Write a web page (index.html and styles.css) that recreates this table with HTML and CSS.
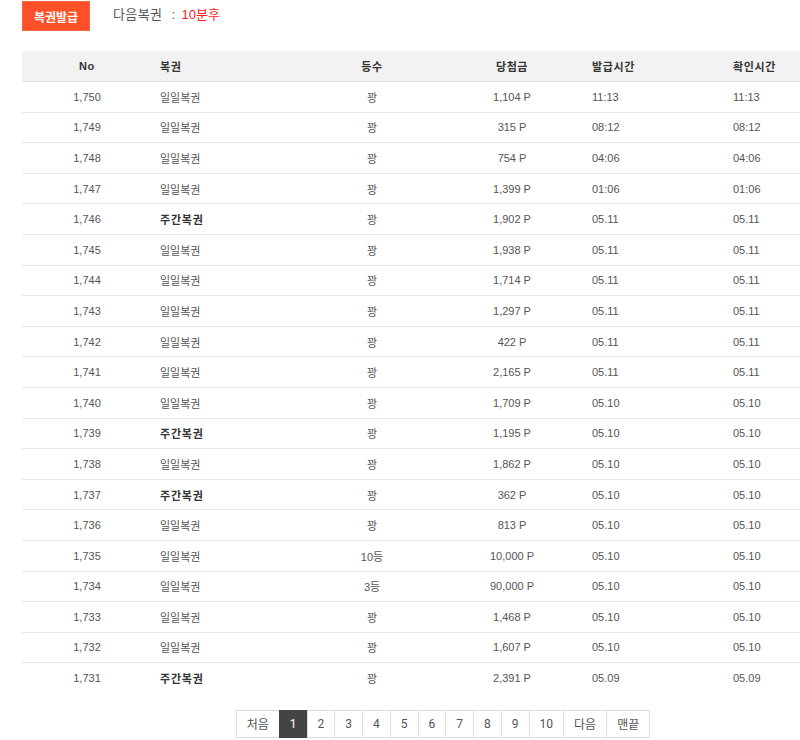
FILE: index.html
```html
<!DOCTYPE html>
<html lang="ko">
<head>
<meta charset="utf-8">
<link rel="stylesheet" href="styles.css">
</head>
<body>
<div class="viewport">
<div class="page">
  <div class="topbar">
    <button class="issue-btn">복권발급</button>
    <div class="next">다음복권<span class="sep">:</span><span class="next-time">10분후</span></div>
  </div>
  <table class="lotto">
    <colgroup>
      <col class="c1"><col class="c2"><col class="c3"><col class="c4"><col class="c5"><col class="c6">
    </colgroup>
    <thead>
      <tr><th class="no">No</th><th class="name">복권</th><th class="rank">등수</th><th class="prize">당첨금</th><th class="time">발급시간</th><th class="time2">확인시간</th></tr>
    </thead>
    <tbody>
      <tr><td class="no">1,750</td><td class="name">일일복권</td><td class="rank">꽝</td><td class="prize">1,104 P</td><td class="time">11:13</td><td class="time2">11:13</td></tr>
      <tr><td class="no">1,749</td><td class="name">일일복권</td><td class="rank">꽝</td><td class="prize">315 P</td><td class="time">08:12</td><td class="time2">08:12</td></tr>
      <tr><td class="no">1,748</td><td class="name">일일복권</td><td class="rank">꽝</td><td class="prize">754 P</td><td class="time">04:06</td><td class="time2">04:06</td></tr>
      <tr><td class="no">1,747</td><td class="name">일일복권</td><td class="rank">꽝</td><td class="prize">1,399 P</td><td class="time">01:06</td><td class="time2">01:06</td></tr>
      <tr><td class="no">1,746</td><td class="name weekly">주간복권</td><td class="rank">꽝</td><td class="prize">1,902 P</td><td class="time">05.11</td><td class="time2">05.11</td></tr>
      <tr><td class="no">1,745</td><td class="name">일일복권</td><td class="rank">꽝</td><td class="prize">1,938 P</td><td class="time">05.11</td><td class="time2">05.11</td></tr>
      <tr><td class="no">1,744</td><td class="name">일일복권</td><td class="rank">꽝</td><td class="prize">1,714 P</td><td class="time">05.11</td><td class="time2">05.11</td></tr>
      <tr><td class="no">1,743</td><td class="name">일일복권</td><td class="rank">꽝</td><td class="prize">1,297 P</td><td class="time">05.11</td><td class="time2">05.11</td></tr>
      <tr><td class="no">1,742</td><td class="name">일일복권</td><td class="rank">꽝</td><td class="prize">422 P</td><td class="time">05.11</td><td class="time2">05.11</td></tr>
      <tr><td class="no">1,741</td><td class="name">일일복권</td><td class="rank">꽝</td><td class="prize">2,165 P</td><td class="time">05.11</td><td class="time2">05.11</td></tr>
      <tr><td class="no">1,740</td><td class="name">일일복권</td><td class="rank">꽝</td><td class="prize">1,709 P</td><td class="time">05.10</td><td class="time2">05.10</td></tr>
      <tr><td class="no">1,739</td><td class="name weekly">주간복권</td><td class="rank">꽝</td><td class="prize">1,195 P</td><td class="time">05.10</td><td class="time2">05.10</td></tr>
      <tr><td class="no">1,738</td><td class="name">일일복권</td><td class="rank">꽝</td><td class="prize">1,862 P</td><td class="time">05.10</td><td class="time2">05.10</td></tr>
      <tr><td class="no">1,737</td><td class="name weekly">주간복권</td><td class="rank">꽝</td><td class="prize">362 P</td><td class="time">05.10</td><td class="time2">05.10</td></tr>
      <tr><td class="no">1,736</td><td class="name">일일복권</td><td class="rank">꽝</td><td class="prize">813 P</td><td class="time">05.10</td><td class="time2">05.10</td></tr>
      <tr><td class="no">1,735</td><td class="name">일일복권</td><td class="rank">10등</td><td class="prize">10,000 P</td><td class="time">05.10</td><td class="time2">05.10</td></tr>
      <tr><td class="no">1,734</td><td class="name">일일복권</td><td class="rank">3등</td><td class="prize">90,000 P</td><td class="time">05.10</td><td class="time2">05.10</td></tr>
      <tr><td class="no">1,733</td><td class="name">일일복권</td><td class="rank">꽝</td><td class="prize">1,468 P</td><td class="time">05.10</td><td class="time2">05.10</td></tr>
      <tr><td class="no">1,732</td><td class="name">일일복권</td><td class="rank">꽝</td><td class="prize">1,607 P</td><td class="time">05.10</td><td class="time2">05.10</td></tr>
      <tr><td class="no">1,731</td><td class="name weekly">주간복권</td><td class="rank">꽝</td><td class="prize">2,391 P</td><td class="time">05.09</td><td class="time2">05.09</td></tr>
    </tbody>
  </table>
  <nav class="pager">
    <a class="pg">처음</a><a class="pg active">1</a><a class="pg">2</a><a class="pg">3</a><a class="pg">4</a><a class="pg">5</a><a class="pg">6</a><a class="pg">7</a><a class="pg">8</a><a class="pg">9</a><a class="pg">10</a><a class="pg">다음</a><a class="pg">맨끝</a>
  </nav>
</div>
</div>
</body>
</html>
```
FILE: styles.css
```css
html, body {
  margin: 0;
  padding: 0;
  background: #fff;
}
body {
  font-family: "Liberation Sans", "Noto Sans CJK KR", sans-serif;
  font-size: 11px;
  color: #555;
}
.viewport {
  width: 800px;
  height: 740px;
  overflow: hidden;
}
.page {
  width: 843px;
  padding: 1px 0 0 22px;
}
.topbar {
  display: flex;
  align-items: center;
  gap: 23px;
  height: 30px;
}
.issue-btn {
  width: 68px;
  height: 30px;
  border: 1px solid #f2653f;
  background: #ff5127;
  color: #fff;
  font-family: "Noto Sans CJK KR", sans-serif;
  font-size: 12px;
  font-weight: 700;
  padding: 0;
  margin: 0;
}
.next {
  font-family: "Noto Sans CJK KR", sans-serif;
  font-size: 13px;
  letter-spacing: 0.4px;
  color: #555;
  margin-top: -6px;
}
.sep {
  font-family: "Liberation Sans", sans-serif;
  margin: 0 6px 0 9px;
}
.next-time {
  color: #ff1a1a;
  letter-spacing: 0;
  font-family: "Liberation Sans", "Noto Sans CJK KR", sans-serif;
}
.lotto {
  width: 843px;
  margin-top: 20px;
  border-collapse: collapse;
  table-layout: fixed;
}
.c1 { width: 130px; }
.c2 { width: 150px; }
.c3 { width: 140px; }
.c4 { width: 140px; }
.c5 { width: 140px; }
.c6 { width: 143px; }
.lotto th {
  height: 30px;
  background: #f2f2f2;
  border-bottom: 1px solid #e2e2e2;
  font-weight: 700;
  color: #333;
  font-size: 11px;
  letter-spacing: 0.6px;
  padding: 0;
}
.lotto td {
  height: 29.6px;
  border-bottom: 1px solid #e8e8e8;
  padding: 0;
  white-space: nowrap;
}
.lotto tbody tr:last-child td {
  border-bottom: 0;
}
.no { text-align: center; }
.name { text-align: left; padding-left: 8px !important; }
.rank { text-align: center; }
.prize { text-align: center; }
.time { text-align: left; padding-left: 10px !important; }
.time2 { text-align: left; padding-left: 11px !important; }
.weekly {
  font-weight: 700;
  color: #333;
  letter-spacing: 0.8px;
}
.pager {
  display: flex;
  justify-content: center;
  margin-top: 17px;
}
.pg {
  display: flex;
  align-items: center;
  justify-content: center;
  height: 26px;
  padding: 0 10px;
  border: 1px solid #ddd;
  margin-left: -1px;
  font-family: "Roboto", "Noto Sans CJK KR", sans-serif;
  font-size: 12px;
  color: #555;
}
.pg.active {
  background: #444;
  border-color: #444;
  color: #fff;
}
```
